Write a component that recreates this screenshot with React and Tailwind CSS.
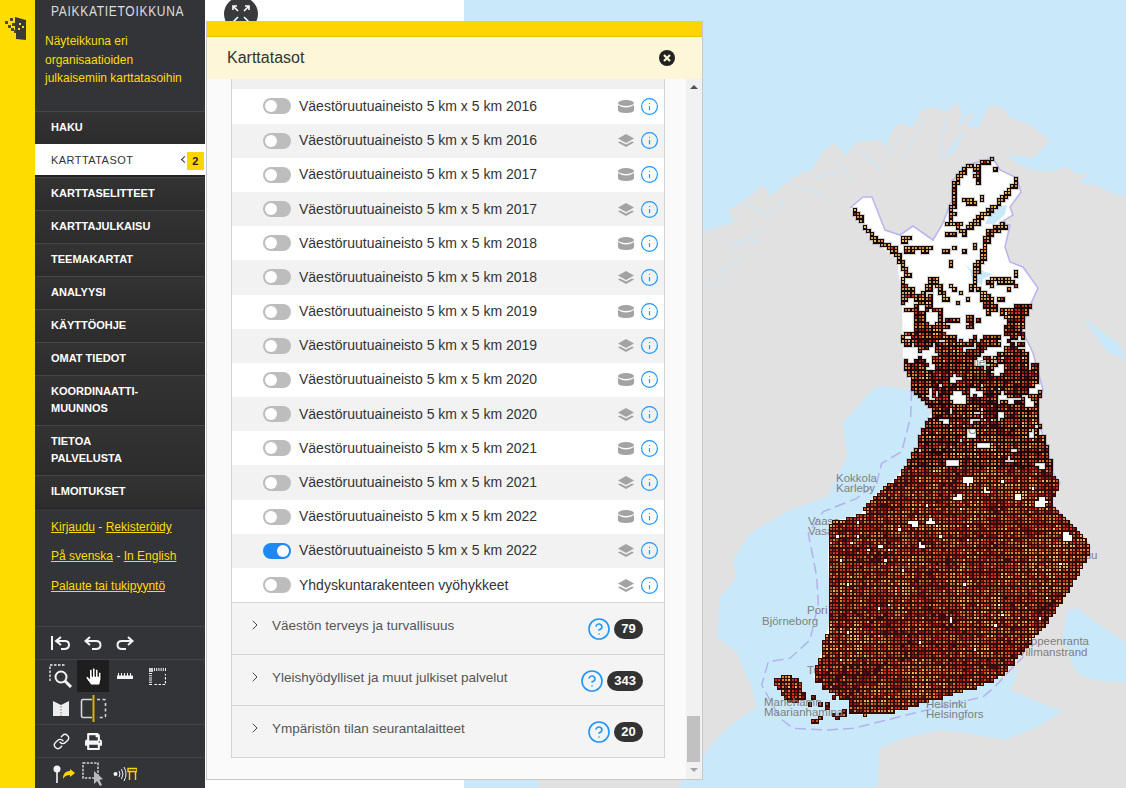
import { CircleHelp, Info, Link as LinkIcon, ChevronRight } from "lucide-react";
import { FaHandPaper, FaPrint } from "react-icons/fa";

const menu = [
  ["HAKU"],
  ["KARTTATASOT"],
  ["KARTTASELITTEET"],
  ["KARTTAJULKAISU"],
  ["TEEMAKARTAT"],
  ["ANALYYSI"],
  ["KÄYTTÖOHJE"],
  ["OMAT TIEDOT"],
  ["KOORDINAATTI-", "MUUNNOS"],
  ["TIETOA", "PALVELUSTA"],
  ["ILMOITUKSET"],
];

const layers = [
  ["Väestöruutuaineisto 5 km x 5 km 2016", "db"],
  ["Väestöruutuaineisto 5 km x 5 km 2016", "stack"],
  ["Väestöruutuaineisto 5 km x 5 km 2017", "db"],
  ["Väestöruutuaineisto 5 km x 5 km 2017", "stack"],
  ["Väestöruutuaineisto 5 km x 5 km 2018", "db"],
  ["Väestöruutuaineisto 5 km x 5 km 2018", "stack"],
  ["Väestöruutuaineisto 5 km x 5 km 2019", "db"],
  ["Väestöruutuaineisto 5 km x 5 km 2019", "stack"],
  ["Väestöruutuaineisto 5 km x 5 km 2020", "db"],
  ["Väestöruutuaineisto 5 km x 5 km 2020", "stack"],
  ["Väestöruutuaineisto 5 km x 5 km 2021", "db"],
  ["Väestöruutuaineisto 5 km x 5 km 2021", "stack"],
  ["Väestöruutuaineisto 5 km x 5 km 2022", "db"],
  ["Väestöruutuaineisto 5 km x 5 km 2022", "stack", true],
  ["Yhdyskuntarakenteen vyöhykkeet", "stack"],
];

const groups = [
  ["Väestön terveys ja turvallisuus", 79],
  ["Yleishyödylliset ja muut julkiset palvelut", 343],
  ["Ympäristön tilan seurantalaitteet", 20],
];

// --- map data, page coordinates ---
const finlandEast = [
  [850, 208], [863, 197], [872, 197], [885, 230], [900, 235], [913, 226], [933, 240], [942, 225],
  [952, 200], [953, 180], [967, 165], [993, 158], [1000, 170], [1017, 178], [1021, 192], [1010, 207],
  [1013, 215], [1000, 223], [1010, 225], [1005, 247], [1010, 262], [1023, 267], [1038, 288], [1027, 312],
  [1022, 330], [1033, 353], [1043, 390], [1037, 403], [1040, 427], [1047, 447], [1053, 473], [1060, 483],
  [1050, 503], [1067, 520], [1083, 537], [1090, 547], [1087, 557],
];
const finland = [
  ...finlandEast,
  [1080, 570], [1060, 603], [1043, 627], [1020, 653], [1000, 677], [977, 687], [923, 702], [900, 710],
  [863, 715], [850, 713], [850, 700], [827, 690], [813, 677], [820, 657], [823, 643], [830, 623], [828, 557],
  [830, 522], [860, 515], [873, 497], [897, 477], [917, 447], [920, 433], [933, 410], [913, 390], [903, 360],
  [902, 300], [897, 260], [870, 237], [857, 217],
];
const aland = [[772, 680], [783, 675], [800, 680], [800, 690], [806, 697], [790, 703], [780, 692]];

const seaBorder = [
  [635, 0], [632, 80], [605, 185], [545, 220], [530, 280], [470, 325], [370, 365], [325, 430], [350, 560],
  [355, 640], [330, 750], [270, 805], [205, 815], [185, 885], [240, 985], [280, 1015], [380, 1020], [460, 1015],
  [640, 970], [850, 920], [885, 890], [940, 830], [970, 800],
].map(([x, y]) => [700 + x / 3, 390 + y / 3]);

const roads = [
  [[853, 208], [863, 227], [873, 238], [893, 248], [900, 262], [908, 277]],
  [[903, 240], [908, 238]],
  [[993, 158], [967, 165], [955, 182], [952, 203], [950, 223]],
  [[976, 167], [978, 182]],
  [[965, 199], [972, 202]],
  [[1017, 180], [1000, 200], [990, 210], [977, 220], [963, 232]],
  [[1003, 225], [987, 233], [983, 257], [977, 267], [972, 287]],
  [[907, 248], [930, 248]],
  [[948, 224], [960, 224]],
  [[948, 236], [952, 233]],
  [[905, 290], [918, 300], [935, 280], [945, 300]],
];
const spots = [
  [945, 252], [955, 248], [965, 251], [975, 246], [950, 263], [1016, 273], [992, 284], [1016, 285], [1008, 290],
  [1026, 307], [982, 198], [994, 168], [977, 178], [1000, 300],
];
const holes = [
  [957, 397, 9], [1028, 403, 6], [970, 433, 7], [983, 445, 6], [953, 462, 7], [967, 480, 6], [1040, 503, 7],
  [1067, 537, 7], [957, 497, 5], [1017, 497, 5], [913, 523, 5], [930, 522, 5], [1010, 460, 4], [1040, 465, 5],
  [920, 545, 3], [1030, 435, 4], [985, 490, 4], [945, 420, 5], [1000, 415, 5],
];

const inside = (poly, x, y) => {
  let c = false;
  for (let i = 0, j = poly.length - 1; i < poly.length; j = i++) {
    const [xi, yi] = poly[i];
    const [xj, yj] = poly[j];
    if (yi > y !== yj > y && x < ((xj - xi) * (y - yi)) / (yj - yi) + xi) c = !c;
  }
  return c;
};

const hash = (a, b) => {
  const s = Math.sin(a * 127.1 + b * 311.7) * 43758.5453;
  return s - Math.floor(s);
};
const noise = (x, y, size) => {
  const gx = x / size;
  const gy = y / size;
  const ix = Math.floor(gx);
  const iy = Math.floor(gy);
  const fx = gx - ix;
  const fy = gy - iy;
  const top = hash(ix, iy) * (1 - fx) + hash(ix + 1, iy) * fx;
  const bot = hash(ix, iy + 1) * (1 - fx) + hash(ix + 1, iy + 1) * fx;
  return top * (1 - fy) + bot * fy;
};
const segDist = (p, a, b) => {
  const dx = b[0] - a[0];
  const dy = b[1] - a[1];
  const l = dx * dx + dy * dy || 1;
  const t = Math.max(0, Math.min(1, ((p[0] - a[0]) * dx + (p[1] - a[1]) * dy) / l));
  return Math.hypot(p[0] - a[0] - t * dx, p[1] - a[1] - t * dy);
};
const nearRoad = (x, y) =>
  roads.some((r) => r.some((a, i) => i > 0 && segDist([x, y], r[i - 1], a) < 1.6 + hash(x, y) * 1.8));

// tan, orange, yellow, brown, red, dark red, near black
const palette = ["#c4a25e", "#e0822a", "#f0b850", "#b85a1e", "#d6281c", "#9a1218", "#4a0a1e"];

function pick(i, j, north) {
  const r = hash(i * 3 + 1, j * 7 + 2);
  const hot = noise(760 + i * 3.43, 150 + j * 3.43, 18);
  if (north) {
    if (r < 0.5) return 0;
    if (r < 0.72) return 2;
    if (r < 0.92) return 1;
    return 4;
  }
  const h = r * 0.65 + hot * 0.35;
  if (h < 0.22) return 2;
  if (h < 0.4) return 1;
  if (h < 0.52) return 3;
  if (h < 0.7) return 4;
  if (h < 0.84) return 5;
  return 6;
}

function buildCells() {
  const pitch = 3.43;
  const halo = [];
  const northBlack = [];
  const black = [];
  const fills = palette.map(() => []);
  const rect = (a, b, c, d) => `M${a} ${b}h${c}v${d}h${-c}z`;
  for (let i = 0; i < 100; i++) {
    for (let j = 0; j < 170; j++) {
      const x = Math.round(760 + i * pitch);
      const y = Math.round(150 + j * pitch);
      const x2 = Math.round(760 + (i + 1) * pitch);
      const y2 = Math.round(150 + (j + 1) * pitch);
      const cx = x + 1.7;
      const cy = y + 1.7;
      let on = false;
      if (inside(aland, cx, cy)) {
        on = true;
      } else if (inside(finland, cx, cy)) {
        if (cy < 278) {
          on = nearRoad(cx, cy);
        } else if (cy < 470) {
          const d = Math.min(0.95, 0.38 + ((cy - 278) / 192) * 0.5);
          const n = noise(cx, cy, 10) * 0.75 + hash(i, j) * 0.25;
          on = n < d || nearRoad(cx, cy);
        } else {
          on = hash(i, j) > 0.012;
        }
        if (holes.some(([hx, hy, r]) => Math.hypot(cx - hx, (cy - hy) * 1.3) < r * (0.7 + noise(cx, cy, 5) * 0.6)))
          on = false;
      }
      if (spots.some(([sx, sy]) => Math.abs(sx - cx) < 1.8 && Math.abs(sy - cy) < 1.8)) on = true;
      if (!on && cy > 695 && cy < 722 && cx > 808 && cx < 850 && hash(i + 3, j) > 0.86) on = true;
      if (!on) continue;
      const w = x2 - x + 1;
      const h = y2 - y + 1;
      const north = cy < 300 && hash(i + 5, j + 5) < 0.9;
      if (cy < 470) halo.push(rect(x - 1, y - 1, w + 2, h + 2));
      if (cy < 470) northBlack.push(rect(x, y, w, h));
      else black.push(rect(x, y, w, h));
      fills[pick(i, j, north)].push(rect(x + 1, y + 1, 2, 2));
    }
  }
  return {
    halo: halo.join(""),
    northBlack: northBlack.join(""),
    black: black.join(""),
    fills: fills.map((f) => f.join("")),
  };
}
const cells = buildCells();
const pts = (a) => a.map((p) => p.join(",")).join(" ");

const land = [
  [690, 240], [703, 233], [716, 226], [733, 222], [728, 210], [745, 200], [763, 185], [770, 196], [790, 180],
  [800, 173], [812, 170], [824, 150], [835, 143], [846, 156], [856, 142], [880, 140], [886, 148], [892, 130],
  [900, 123], [912, 128], [922, 110], [933, 107], [945, 112], [957, 103], [962, 112], [958, 128], [968, 115],
  [975, 113], [942, 160], [956, 150], [966, 125], [978, 128], [990, 105], [1003, 108], [1010, 117], [1030, 125],
  [1050, 140], [1033, 158], [1007, 155], [1020, 165], [1033, 170], [1050, 172], [1067, 167], [1076, 174],
  [1090, 173], [1077, 183], [1095, 185], [1110, 192], [1126, 197], [1126, 788], [877, 788], [880, 748],
  [905, 738], [940, 730], [967, 733], [1005, 740], [1035, 728], [1063, 712], [1027, 697], [1010, 690],
  [1020, 667], [1002, 680], [960, 500], [935, 420], [915, 390], [880, 386], [872, 390], [843, 423], [847, 457],
  [827, 497], [790, 510], [750, 533], [733, 560], [737, 577], [720, 597], [717, 637], [737, 653], [750, 683],
  [757, 707], [733, 723], [713, 743], [703, 757], [690, 760],
];
const ladoga = [
  [1067, 610], [1077, 608], [1097, 623], [1126, 643], [1126, 683], [1093, 680], [1077, 673], [1070, 657], [1063, 637],
];

const labels = [
  ["Kokkola", 836, 482], ["Karleby", 836, 492], ["Vaasa", 808, 525], ["Vasa", 808, 535], ["Pori", 807, 614],
  ["Björneborg", 762, 625], ["Turku", 807, 674], ["Lappeenranta", 1018, 645], ["Villmanstrand", 1018, 656],
  ["Joensuu", 1054, 559], ["Rovaniemi", 943, 366], ["Oulu", 968, 434],
];
const topLabels = [
  ["Mariehamn", 764, 706], ["Maarianhamina", 764, 716], ["Helsinki", 926, 708], ["Helsingfors", 926, 718],
];

function MapLabels({ items }) {
  return (
    <g fontFamily="Liberation Sans, sans-serif" fontSize="11.5" fill="#808080">
      {items.map(([t, x, y]) => (
        <text key={t} x={x} y={y}>
          {t}
        </text>
      ))}
    </g>
  );
}

function MapView() {
  return (
    <svg viewBox="464 0 662 788" className="block w-full h-full">
      <rect x="464" y="0" width="662" height="788" fill="#c9e9fa" />
      <polygon points={pts(land)} fill="#e1e1e1" />
      <polygon points={pts(ladoga)} fill="#c9e9fa" />
      <polygon points="537,779 683,779 678,788 540,788" fill="#e1e1e1" />
      {/* fjords and lakes on the grey land */}
      <g fill="none" stroke="#c9e9fa" strokeWidth="1.2">
        <path d="M712 231 L740 218 M730 245 L762 232 M745 204 L770 215 L785 198 M790 184 L826 196 M815 178 L843 170 M836 158 L850 178 M860 150 L883 172 M905 130 L885 160 M925 116 L905 155 M946 118 L940 158" />
        <path d="M706 285 L728 282 M716 272 L742 258 M735 245 L760 240" />
      </g>
      <path d="M1083 317 L1100 330 L1120 345 L1126 360 L1108 352 L1095 335 Z" fill="#c9e9fa" />
      <polygon points={pts(finland)} fill="#ffffff" />
      <polyline points={pts(finlandEast)} fill="none" stroke="#bcb6ef" strokeWidth="1.6" />
      <polyline points={pts(seaBorder)} fill="none" stroke="#b4b2ee" strokeWidth="1.5" strokeDasharray="11 5" />
      <path d="M993 207 L1007 205 L1005 214 L995 224 L985 224 Z M963 263 L972 270 L978 268 L985 272 L993 274 L983 279 L982 285 L972 280 L970 270 Z M1000 634 L1012 640 L1010 644 L998 638 Z" fill="#c9e9fa" />
      <MapLabels items={labels} />
      <g shapeRendering="crispEdges">
        <path d={cells.halo} fill="#8f8f8f" fillOpacity="0.4" />
        <path d={cells.northBlack} fill="#150a08" />
        <path d={cells.black} fill="#2e0e08" />
        {cells.fills.map((d, i) => (
          <path key={i} d={d} fill={palette[i]} />
        ))}
      </g>
      <MapLabels items={topLabels} />
    </svg>
  );
}

function Logo() {
  return (
    <svg width="22" height="26" viewBox="0 0 22 26" className="absolute left-[5px] top-[15px]">
      <path d="M10 2 L21 5 V25 L11 24 V18 L10 18 Z" fill="#3a3a3a" />
      <path d="M14 8h2v2h-2zM17 11h2v2h-2zM13 13h2v2h-2z" fill="#ffdc00" />
      <path d="M0 6h3v3H0zM5 3h3v3H5zM3 10h3v3H3zM7 8h3v3H7zM6 13h3v3H6zM9 15h2v3H9z" fill="#4a4a3a" />
    </svg>
  );
}

function Tool({ children, active }) {
  return (
    <div className={`w-8 h-8 flex items-center justify-center ${active ? "bg-[#1e1e1e]" : ""}`}>{children}</div>
  );
}

function ToolIcons() {
  const w = "#f4f4f4";
  return (
    <div className="flex flex-col shrink-0">
      <div className="flex h-[33px] shrink-0 pl-[10px] border-t border-[#414246]">
        <Tool>
          <svg width="20" height="16" viewBox="0 0 20 16" fill="none" stroke={w} strokeWidth="2">
            <path d="M1 1v14" />
            <path d="M10 2 L5 6 L10 10 M5 6 H14 Q18 6 18 10 Q18 14 13 14 H10" />
          </svg>
        </Tool>
        <Tool>
          <svg width="18" height="14" viewBox="0 0 18 14" fill="none" stroke={w} strokeWidth="2">
            <path d="M6 1 L1.5 5 L6 9 M2 5 H12 Q16.5 5 16.5 9 Q16.5 13 12 13 H8" />
          </svg>
        </Tool>
        <Tool>
          <svg width="18" height="14" viewBox="0 0 18 14" fill="none" stroke={w} strokeWidth="2">
            <path d="M12 1 L16.5 5 L12 9 M16 5 H6 Q1.5 5 1.5 9 Q1.5 13 6 13 H10" />
          </svg>
        </Tool>
      </div>
      <div className="flex h-[33px] shrink-0 pl-[10px] border-t border-[#414246]">
        <Tool>
          <svg width="24" height="24" viewBox="0 0 24 24" fill="none" stroke={w}>
            <path d="M1 17V1h15" strokeDasharray="2.5 1.5" strokeWidth="1.3" />
            <circle cx="12" cy="13" r="5.5" strokeWidth="2" />
            <path d="M16 17 L22 23" strokeWidth="3" />
          </svg>
        </Tool>
        <Tool active>
          <FaHandPaper size={17} className="text-white" stroke="#000" strokeWidth="25" />
        </Tool>
        <Tool>
          <svg width="16" height="6" viewBox="0 0 16 6">
            <path d="M0 2.5h16V6H0z" fill={w} />
            <path d="M1 0h1v3H1zM4 0h1v3H4zM7 0h1v3H7zM10 0h1v3h-1zM13 0h1v3h-1z" fill={w} />
          </svg>
        </Tool>
        <Tool>
          <svg width="17" height="17" viewBox="0 0 17 17" fill="none">
            <path d="M0 0h4v4H0z" fill="#cfcfcf" />
            <path d="M5 1.5h12M1.5 5v12" stroke={w} strokeWidth="3" strokeDasharray="1 1.2" />
            <path d="M5.5 16.5h11V6" stroke={w} strokeWidth="1.2" strokeDasharray="2.5 1.5" />
          </svg>
        </Tool>
      </div>
      <div className="flex h-[32px] shrink-0 pl-[10px]">
        <Tool>
          <svg width="16" height="15" viewBox="0 0 16 15">
            <path d="M0 0 L8 4 L16 0 V15 H0 Z" fill="#ededed" />
            <path d="M8 5v10" stroke="#77787b" strokeDasharray="1.5 1.5" />
          </svg>
        </Tool>
        <Tool>
          <svg width="27" height="27" viewBox="0 0 27 27" fill="none">
            <path d="M12 4.5H3Q1.5 4.5 1.5 6V21Q1.5 22.5 3 22.5H12" stroke="#d6d6d6" strokeWidth="1.6" />
            <path d="M17 4.5h7q1.5 0 1.5 1.5v15q0 1.5-1.5 1.5h-7" stroke="#d6d6d6" strokeWidth="1.6" strokeDasharray="3 2.5" />
            <path d="M13.5 0v27" stroke="#d4b106" strokeWidth="2" />
          </svg>
        </Tool>
      </div>
      <div className="flex h-[33px] shrink-0 pl-[10px] border-t border-[#414246]">
        <Tool>
          <LinkIcon size={17} color={w} strokeWidth={2} />
        </Tool>
        <Tool>
          <FaPrint size={17} color={w} />
        </Tool>
      </div>
      <div className="flex h-[33px] shrink-0 pl-[10px] border-t border-[#414246]">
        <Tool>
          <div className="flex items-center gap-[1px] pl-[6px]">
            <svg width="8" height="18" viewBox="0 0 8 18">
              <circle cx="4" cy="4" r="3.5" fill={w} />
              <path d="M3.2 6h1.6v12H3.2z" fill={w} />
            </svg>
            <svg width="13" height="10" viewBox="0 0 13 10">
              <path d="M8 0 L13 4 L8 8 V6 Q3 6 1 10 Q1 2 8 2 Z" fill="#ffd400" />
            </svg>
          </div>
        </Tool>
        <Tool>
          <svg width="22" height="25" viewBox="0 0 22 25" fill="none">
            <rect x="1" y="1" width="15" height="15" stroke="#cfcfcf" strokeWidth="1.5" strokeDasharray="2.5 1.2" />
            <path d="M12 9 L12 22 L15 19 L18 24 L20 23 L17.5 18 L21 17 Z" fill="#b8b8b8" />
          </svg>
        </Tool>
        <Tool>
          <svg width="24" height="16" viewBox="0 0 24 16" fill="none">
            <circle cx="2.5" cy="8" r="2" fill={w} />
            <path d="M6 5Q8 8 6 11M8.5 3Q11.5 8 8.5 13M11 1Q15 8 11 15" stroke={w} strokeWidth="1" />
            <path d="M15 2.5h9v3h-9zM16.5 5v9M22.5 5v9" stroke="#ffd400" strokeWidth="1.4" />
          </svg>
        </Tool>
      </div>
    </div>
  );
}

function Sidebar() {
  return (
    <div className="relative flex h-full w-[205px] shrink-0 bg-[#333438] overflow-hidden">
      <div className="w-[35px] shrink-0 bg-[#ffdc00]">
        <Logo />
      </div>
      <div className="flex-1 min-w-0 flex flex-col">
        <div className="h-[111px] pt-[2px] shrink-0">
          <div className="ml-[16px] text-[12px] leading-[18px] text-[#dedede] tracking-[0.7px] scale-y-125">
            PAIKKATIETOIKKUNA
          </div>
          <div className="ml-[10px] mt-[12px] text-[12px] leading-[18.5px] text-[#ffdc00]">
            Näyteikkuna eri
            <br />
            organisaatioiden
            <br />
            julkaisemiin karttatasoihin
          </div>
        </div>
        {menu.map((lines) => {
          const active = lines[0] === "KARTTATASOT";
          return (
            <div
              key={lines[0]}
              className={
                active
                  ? "relative h-[33px] shrink-0 pl-[16px] pt-[1px] flex items-center bg-white border-b-[2px] border-[#222] text-[11px] text-[#333] tracking-[0.45px]"
                  : "shrink-0 px-[16px] pt-[7px] pb-[8px] border-t border-[#45464a] bg-gradient-to-b from-[#333333] to-[#2c2c2c] text-[11px] leading-[17px] font-bold text-white"
              }
            >
              <div>
                {lines.map((l) => (
                  <div key={l}>{l}</div>
                ))}
              </div>
              {active && (
                <>
                  <span className="absolute right-[18px] top-[13px] w-[5px] h-[5px] border-l border-b border-[#333] rotate-45" />
                  <span className="absolute right-[1px] top-[8px] w-[17px] h-[18px] bg-[#ffd400] text-[#222] font-bold text-[11px] flex items-center justify-center">
                    2
                  </span>
                </>
              )}
            </div>
          );
        })}
        <div className="flex flex-col pl-[16px] pt-[10px] text-[12px] leading-[16.5px] text-[#d8d8d8] border-t border-[#25262a] h-[118px] shrink-0">
          <div>
            <a className="text-[#ffdc00] underline">Kirjaudu</a> - <a className="text-[#ffdc00] underline">Rekisteröidy</a>
          </div>
          <div className="mt-[12px]">
            <a className="text-[#ffdc00] underline">På svenska</a> - <a className="text-[#ffdc00] underline">In English</a>
          </div>
          <div className="mt-[13.5px]">
            <a className="text-[#ffdc00] underline">Palaute tai tukipyyntö</a>
          </div>
        </div>
        <ToolIcons />
      </div>
    </div>
  );
}

function DbIcon() {
  return (
    <svg width="16" height="13" viewBox="0 0 16 13" fill="#a3a3a3">
      <ellipse cx="8" cy="3" rx="8" ry="3" />
      <path d="M0 5 Q8 10 16 5 V10 Q16 13 8 13 Q0 13 0 10 Z" />
    </svg>
  );
}

function StackIcon() {
  return (
    <svg width="16" height="13" viewBox="0 0 16 13" fill="#a3a3a3">
      <path d="M8 0 L16 4.5 L8 9 L0 4.5 Z" />
      <path d="M2 7.5 L8 10.5 L14 7.5 L16 8.5 L8 13 L0 8.5 Z" />
    </svg>
  );
}

function LayerRow({ name, kind, on, odd }) {
  return (
    <div className={`h-[34.2px] shrink-0 flex items-center pl-[31px] pr-[5px] ${odd ? "bg-[#f2f2f2]" : "bg-white"}`}>
      <span className={`relative w-[28px] h-[16px] rounded-full shrink-0 ${on ? "bg-[#1e88f5]" : "bg-[#bdbdbd]"}`}>
        <span className={`absolute top-[2px] w-[12px] h-[12px] rounded-full bg-white ${on ? "right-[2px]" : "left-[2px]"}`} />
      </span>
      <span className="ml-[8px] text-[14px] text-[#333] flex-1 whitespace-nowrap">{name}</span>
      {kind === "db" ? <DbIcon /> : <StackIcon />}
      <Info size={19} color="#1e96ff" strokeWidth={1.5} className="ml-[6px]" />
    </div>
  );
}

function Panel() {
  return (
    <div className="absolute left-[206px] top-[21px] w-[497px] h-[759px] border border-[#c8c8c8] bg-[#fafafa] flex flex-col">
      <div className="h-[15px] shrink-0 bg-[#ffd400] border-b border-[#e8c200]" />
      <div className="h-[42px] shrink-0 bg-[#fdf6d8] flex items-center justify-between pl-[20px] pr-[27px]">
        <span className="text-[16px] text-[#333]">Karttatasot</span>
        <svg width="16" height="16" viewBox="0 0 16 16">
          <circle cx="8" cy="8" r="8" fill="#222" />
          <path d="M5 5 L11 11 M11 5 L5 11" stroke="#fdf6d8" strokeWidth="2.2" />
        </svg>
      </div>
      <div className="flex-1 min-h-0 flex">
        <div className="flex-1 min-w-0 pl-[24px] pr-[21px]">
          <div className="border-x border-b border-[#d4d4d4] flex flex-col">
            <div className="h-[10.4px] bg-[#f0f0f0]" />
            {layers.map(([name, kind, on], i) => (
              <LayerRow key={i} name={name} kind={kind} on={on} odd={i % 2 === 1} />
            ))}
            {groups.map(([name, count]) => (
              <div key={name} className="h-[51.6px] shrink-0 flex items-start pt-[13px] pl-[15px] pr-[21px] bg-[#f4f4f4] border-t border-[#d4d4d4]">
                <ChevronRight size={16} color="#444" strokeWidth={1.5} className="mt-[1px]" />
                <span className="ml-[9px] flex-1 text-[13.5px] text-[#555] leading-[20px] whitespace-nowrap">{name}</span>
                <CircleHelp size={24} color="#1e96ff" strokeWidth={1.6} className="mt-[1px]" />
                <span className="ml-[3px] mt-[3px] h-[20px] px-[7px] min-w-[29px] rounded-full bg-[#333] text-white text-[13px] font-bold leading-[20px] text-center">
                  {count}
                </span>
              </div>
            ))}
          </div>
        </div>
        <div className="relative w-[16px] shrink-0 bg-[#f1f1f1]">
          <span className="absolute left-[4px] top-[6px] w-0 h-0 border-x-[4px] border-x-transparent border-b-[4px] border-b-[#505050]" />
          <div className="absolute left-[1px] top-[637px] w-[13px] h-[46px] bg-[#c1c1c1]" />
          <span className="absolute left-[4px] top-[689px] w-0 h-0 border-x-[4px] border-x-transparent border-t-[4px] border-t-[#a3a3a3]" />
        </div>
      </div>
    </div>
  );
}

export default function App() {
  return (
    <div className="relative flex w-full h-screen overflow-hidden bg-white font-['Liberation_Sans',Arial,sans-serif]">
      <Sidebar />
      <div className="relative w-[259px] shrink-0 bg-white">
        <div className="absolute left-[19px] -top-[3px] w-[34px] h-[34px] rounded-full bg-[#3a3a3c] flex items-center justify-center">
          <svg width="20" height="20" viewBox="0 0 20 20" fill="none" stroke="#fff" strokeWidth="1.6">
            <path d="M7 7 L2 2 M2 6 V2 H6 M13 7 L18 2 M14 2 H18 V6 M7 13 L2 18 M13 13 L18 18" />
          </svg>
        </div>
      </div>
      <div className="flex-1 min-w-0">
        <MapView />
      </div>
      <Panel />
    </div>
  );
}
